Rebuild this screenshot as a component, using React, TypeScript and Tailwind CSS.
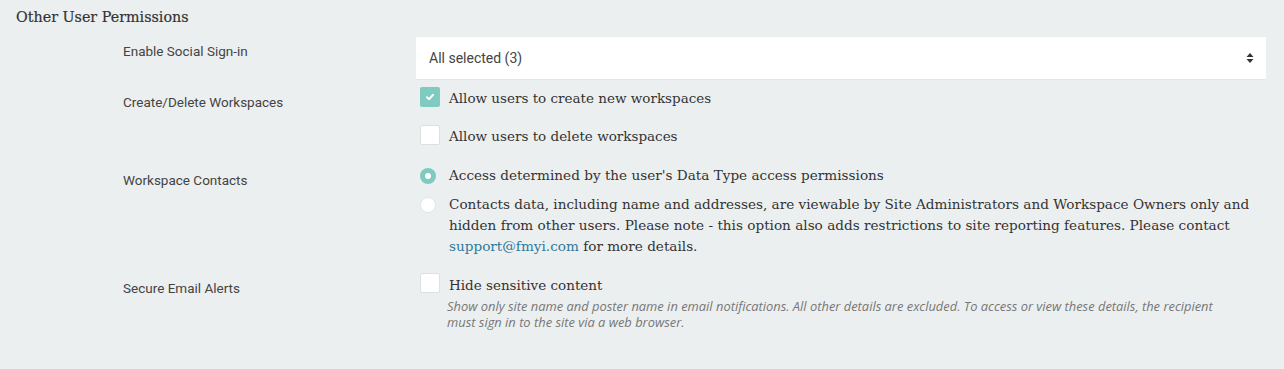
import { useState } from "react";

const slab = "font-['DejaVu_Serif','Liberation_Serif',serif]";
const sans = "font-['Roboto','Liberation_Sans',sans-serif]";

function CheckBox({ checked }: { checked: boolean }) {
  return checked ? (
    <span className="flex h-5 w-5 shrink-0 items-center justify-center rounded-[2px] bg-[#7fcbbf]">
      <svg width="10" height="10" viewBox="0 0 10 10" fill="none" stroke="white" strokeWidth="2" strokeLinecap="round" strokeLinejoin="round">
        <path d="M2 5.2 L4.2 7.2 L8 2.8" />
      </svg>
    </span>
  ) : (
    <span className="h-5 w-5 shrink-0 rounded-[2px] border border-[#dde0e0] bg-white" />
  );
}

function Radio({ checked }: { checked: boolean }) {
  return checked ? (
    <span className="mt-[3px] flex h-4 w-4 shrink-0 items-center justify-center rounded-full bg-[#7fcbbf]">
      <span className="h-[6px] w-[6px] rounded-full bg-white" />
    </span>
  ) : (
    <span className="mt-[3px] h-4 w-4 shrink-0 rounded-full border border-[#e3e6e6] bg-white" />
  );
}

export default function App() {
  const [create] = useState(true);

  return (
    <div className="h-[369px] w-full bg-[#eceff0] px-4 pt-[7px] text-[#333]">
      <h2 className={`${slab} text-[14.3px] font-normal leading-5 text-[#333] [-webkit-text-stroke:0.2px_#333]`}>
        Other User Permissions
      </h2>

      {/* Enable Social Sign-in */}
      <div className="mt-[10px] flex pl-[107px] pr-[2px]">
        <div className={`${sans} w-[293px] pt-[4px] text-[13.5px] leading-5 text-[#444]`}>Enable Social Sign-in</div>
        <div className={`${sans} flex h-[42px] flex-1 items-center justify-between bg-white pl-[13px] pr-[12px] text-[14px] text-[#444] shadow-[0_1px_0_#e2e5e5]`}>
          <span>All selected (3)</span>
          <svg width="8" height="12" viewBox="0 0 8 12" fill="#333">
            <path d="M4 1 L7.5 5 H0.5 Z" />
            <path d="M4 11 L7.5 7 H0.5 Z" />
          </svg>
        </div>
      </div>

      {/* Create/Delete Workspaces */}
      <div className="mt-[8px] flex pl-[107px]">
        <div className={`${sans} w-[293px] pt-[5px] text-[13.5px] leading-5 text-[#444]`}>Create/Delete Workspaces</div>
        <div className="flex flex-col gap-[18px] pl-[4px]">
          <label className={`${slab} flex items-center gap-[9px] text-[13.5px] leading-5`}>
            <CheckBox checked={create} />
            <span className="relative top-[1px]">Allow users to create new workspaces</span>
          </label>
          <label className={`${slab} flex items-center gap-[9px] text-[13.5px] leading-5`}>
            <CheckBox checked={false} />
            <span className="relative top-[1px]">Allow users to delete workspaces</span>
          </label>
        </div>
      </div>

      {/* Workspace Contacts */}
      <div className="mt-[20px] flex pl-[107px]">
        <div className={`${sans} w-[293px] pt-[5px] text-[13.5px] leading-5 text-[#444]`}>Workspace Contacts</div>
        <div className="flex w-[850px] flex-col gap-[8px] pl-[4px]">
          <label className={`${slab} flex items-start gap-[13px] text-[13.6px] leading-[21px]`}>
            <Radio checked />
            <span>Access determined by the user's Data Type access permissions</span>
          </label>
          <label className={`${slab} flex items-start gap-[13px] text-[13.6px] leading-[21px]`}>
            <Radio checked={false} />
            <span>
              Contacts data, including name and addresses, are viewable by Site Administrators and Workspace Owners only and
              hidden from other users. Please note - this option also adds restrictions to site reporting features. Please contact{" "}
              <a className="text-[#2d7a9c]">support@fmyi.com</a> for more details.
            </span>
          </label>
        </div>
      </div>

      {/* Secure Email Alerts */}
      <div className="mt-[16px] flex pl-[107px]">
        <div className={`${sans} w-[293px] pt-[5px] text-[13.5px] leading-5 text-[#444]`}>Secure Email Alerts</div>
        <div className="flex flex-col pl-[4px]">
          <label className={`${slab} flex items-center gap-[9px] text-[13.5px] leading-5`}>
            <CheckBox checked={false} />
            <span className="relative top-[2px]">Hide sensitive content</span>
          </label>
          <p className="mt-[5px] w-[830px] pl-[27px] font-['Open_Sans','Lato',sans-serif] text-[12.9px] italic leading-4 text-[#777]">
            Show only site name and poster name in email notifications. All other details are excluded. To access or view these details, the recipient
            <br />
            must sign in to the site via a web browser.
          </p>
        </div>
      </div>
    </div>
  );
}
